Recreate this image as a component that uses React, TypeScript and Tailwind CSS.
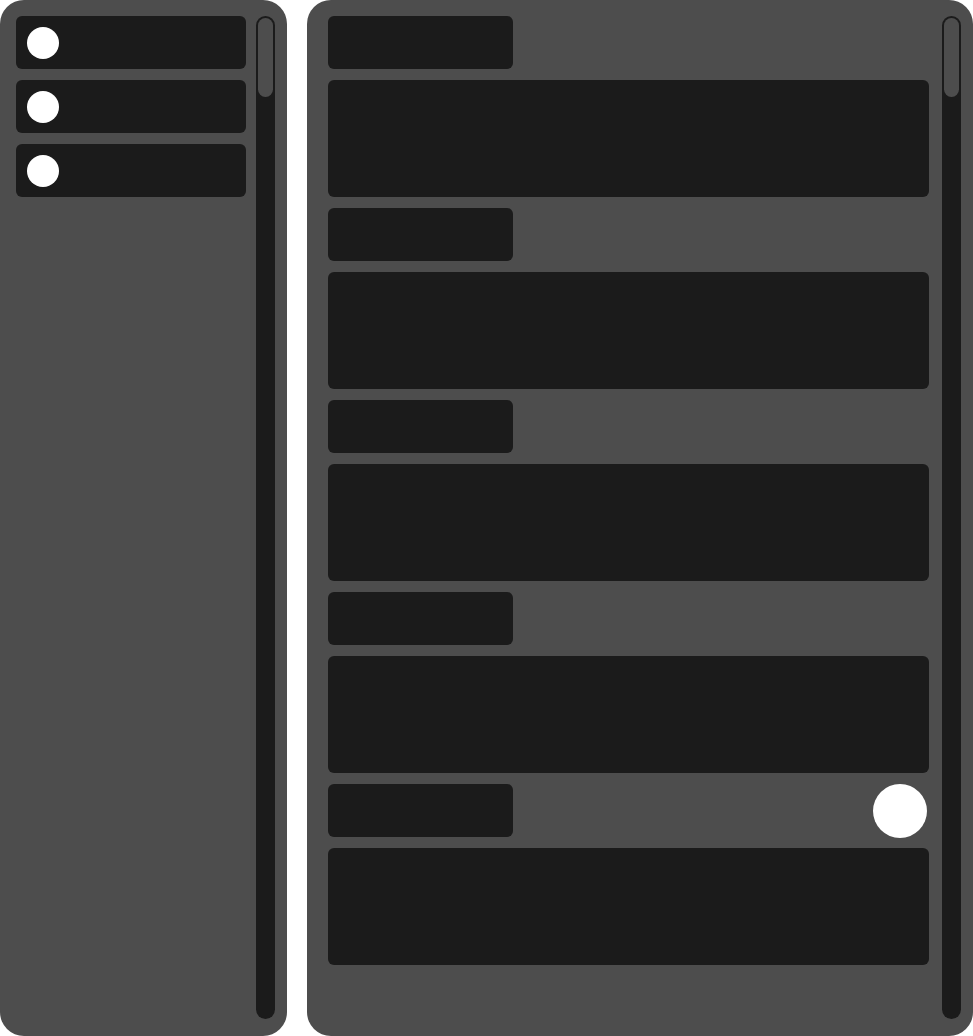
import React from 'react';

const Scrollbar: React.FC = () => (
  <div className="w-[19px] shrink-0 rounded-full bg-[#1b1b1b] p-[2px]">
    <div className="h-[79px] rounded-full bg-[#4d4d4d]"></div>
  </div>
);

const App: React.FC = () => {
  const sections = [0, 1, 2, 3, 4];

  return (
    <div className="flex h-[1036px] w-[973px] gap-5 bg-white">
      {/* Sidebar */}
      <aside className="flex w-[287px] shrink-0 gap-[10px] rounded-3xl bg-[#4d4d4d] pt-4 pb-[17px] pl-4 pr-3">
        <div className="flex w-[230px] flex-col gap-[11px]">
          {[0, 1, 2].map((i) => (
            <div key={i} className="flex h-[53px] items-center rounded-md bg-[#1b1b1b] px-[11px]">
              <span className="h-8 w-8 rounded-full bg-white"></span>
            </div>
          ))}
        </div>
        <Scrollbar />
      </aside>

      {/* Main */}
      <main className="flex flex-1 gap-[13px] rounded-3xl bg-[#4d4d4d] pt-4 pb-[17px] pl-[21px] pr-3">
        <div className="flex flex-1 flex-col gap-[11px]">
          {sections.map((i) => (
            <React.Fragment key={i}>
              <div className="flex h-[53px] items-center justify-between">
                <div className="h-full w-[185px] rounded-md bg-[#1b1b1b]"></div>
                {i === 4 && <span className="mr-[2px] h-[54px] w-[54px] rounded-full bg-white"></span>}
              </div>
              <div className="h-[117px] rounded-md bg-[#1b1b1b]"></div>
            </React.Fragment>
          ))}
        </div>
        <Scrollbar />
      </main>
    </div>
  );
};

export default App;
